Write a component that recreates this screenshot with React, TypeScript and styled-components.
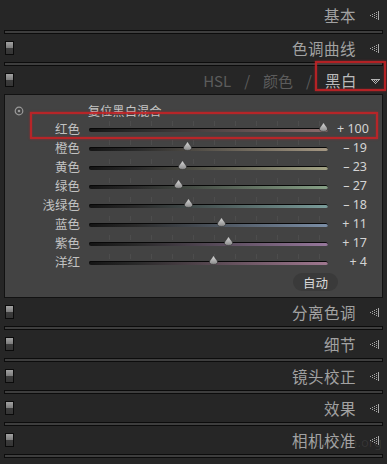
import React from 'react';
import styled, { createGlobalStyle } from 'styled-components';

const GlobalStyle = createGlobalStyle`
  html, body {
    margin: 0;
    padding: 0;
    background: #262626;
  }
  body {
    font-family: "Noto Sans CJK SC", "Noto Sans", sans-serif;
  }
`;

const Page = styled.div`
  position: relative;
  width: 387px;
  height: 464px;
  overflow: hidden;
  box-sizing: border-box;
  padding: 0 4px;
  background: #262626;
`;

const Header = styled.div<{ $first?: boolean }>`
  display: flex;
  align-items: center;
  height: ${p => (p.$first ? 30 : 28)}px;
  padding-left: 1px;
  padding-right: 2px;
`;

const Switch = styled.div`
  width: 7px;
  height: 12px;
  border: 1px solid #0b0b0b;
  background: linear-gradient(to bottom, #a2a2a2 0%, #7c7c7c 48%, #3c3c3c 52%, #343434 100%);
`;

const Titles = styled.div`
  margin-left: auto;
  display: flex;
  align-items: center;
  gap: 13px;
  font-size: 15.5px;
  letter-spacing: 0.5px;
  color: #a2a2a2;
`;

const Tab = styled.span<{ $active?: boolean }>`
  color: ${p => (p.$active ? '#bababa' : '#5c5c5c')};
  font-size: ${p => (p.$active ? '15.5px' : '15px')};
  letter-spacing: ${p => (p.$active ? '0.5px' : '0')};
`;

const Arrow = styled.svg`
  margin-left: 14px;
  margin-right: 1px;
  flex: none;
`;

const Separator = styled.div`
  height: 4px;
  box-sizing: border-box;
  border: 1px solid #0c0c0c;
  background: #3e3e3e;
`;

const Panel = styled.div`
  height: 204px;
  box-sizing: border-box;
  border: 1px solid #121212;
  background: #434343;
  padding-top: 6px;
`;

const ResetRow = styled.div`
  position: relative;
  height: 19px;
  display: flex;
  align-items: center;
  padding-left: 83px;
  font-size: 12px;
  color: #c6c6c6;
  letter-spacing: 0.3px;
`;

const ResetIcon = styled.svg`
  position: absolute;
  left: 9px;
  top: 5px;
`;

const SliderRow = styled.div`
  display: grid;
  grid-template-columns: 75px 239px 30px;
  column-gap: 9px;
  align-items: center;
  height: 19px;
`;

const Label = styled.div`
  text-align: right;
  font-size: 12.5px;
  color: #c2c2c2;
  line-height: 1;
`;

const Track = styled.div<{ $tint: string }>`
  position: relative;
  height: 4px;
  border-radius: 2px;
  background: linear-gradient(to right, #141414 0%, #2a2a2a 20%, ${p => p.$tint} 100%);
  box-shadow: inset 0 1px 0 #080808;

  &::before {
    content: '';
    position: absolute;
    left: 0;
    right: 0;
    top: -7px;
    height: 5px;
    background: repeating-linear-gradient(
      to right,
      transparent 0px,
      transparent 20px,
      rgba(255, 255, 255, 0.05) 20px,
      rgba(255, 255, 255, 0.05) 21px
    );
  }
`;

const Thumb = styled.svg`
  position: absolute;
  top: -6px;
  margin-left: -5px;
`;

const Value = styled.div`
  text-align: right;
  font-size: 12.5px;
  color: #d4d4d4;
  font-family: "Noto Sans", "Liberation Sans", sans-serif;
  white-space: pre;
  line-height: 1;
`;

const AutoRow = styled.div`
  display: flex;
  justify-content: flex-end;
  padding-right: 44px;
  margin-top: 1px;
`;

const AutoButton = styled.div`
  width: 45px;
  height: 18px;
  border-radius: 9px;
  background: #3a3a3a;
  color: #dadada;
  font-size: 12.5px;
  display: flex;
  align-items: center;
  justify-content: center;
`;

const Highlight = styled.div<{ $x: number; $y: number; $w: number; $h: number }>`
  position: absolute;
  left: ${p => p.$x}px;
  top: ${p => p.$y}px;
  width: ${p => p.$w}px;
  height: ${p => p.$h}px;
  box-sizing: border-box;
  border: 2px solid rgba(196, 34, 38, 0.9);
  box-shadow: 0 0 2px rgba(196, 34, 38, 0.7), inset 0 0 2px rgba(196, 34, 38, 0.6);
  pointer-events: none;
`;

const Watermark = styled.div`
  position: absolute;
  right: 5px;
  top: 433px;
  font-family: "Noto Sans", sans-serif;
  font-size: 13px;
  color: rgba(255, 255, 255, 0.08);
  pointer-events: none;
`;

const LeftArrow = () => {
  const dots: React.ReactNode[] = [];
  for (let c = 0; c < 5; c++) {
    const x = c * 2;
    for (let r = -c; r <= c; r += 1) {
      if ((r + c) % 2 === 0 || c === 4) dots.push(<rect key={`${c}-${r}`} x={x} y={4 + r} width={1} height={1} fill="#a8a8a8" />);
    }
  }
  return (
    <Arrow width="10" height="9" viewBox="0 0 10 9">
      {dots}
    </Arrow>
  );
};

const DownArrow = () => {
  const dots: React.ReactNode[] = [];
  for (let r = 0; r < 5; r++) {
    const half = 4 - r;
    for (let c = -half; c <= half; c++) {
      if ((c + half) % 2 === 0 || r === 0) dots.push(<rect key={`${r}-${c}`} x={4 + c} y={r} width={1} height={1} fill="#b4b4b4" />);
    }
  }
  return (
    <Arrow width="9" height="6" viewBox="0 0 9 6" style={{ marginTop: 4 }}>
      {dots}
    </Arrow>
  );
};

const PinThumb = ({ pos }: { pos: number }) => (
  <Thumb width="11" height="10" viewBox="0 0 11 10" style={{ left: pos }}>
    <defs>
      <linearGradient id="pin" x1="0" y1="0" x2="0" y2="1">
        <stop offset="0" stopColor="#dadada" />
        <stop offset="1" stopColor="#8a8a8a" />
      </linearGradient>
    </defs>
    <path d="M5.5 0.5 L9.4 6 Q10.3 9.4 5.5 9.4 Q0.7 9.4 1.6 6 Z" fill="url(#pin)" stroke="#2a2a2a" strokeWidth="0.6" />
  </Thumb>
);

const sliders = [
  { label: '红色', value: 100, tint: '#8a6d6d' },
  { label: '橙色', value: -19, tint: '#a59883' },
  { label: '黄色', value: -23, tint: '#a3a384' },
  { label: '绿色', value: -27, tint: '#86a086' },
  { label: '浅绿色', value: -18, tint: '#7a9c9a' },
  { label: '蓝色', value: 11, tint: '#7b8ea6' },
  { label: '紫色', value: 17, tint: '#97789c' },
  { label: '洋红', value: 4, tint: '#a07890' },
];

const fmt = (v: number) => (v >= 0 ? `+ ${v}` : `\u2013 ${Math.abs(v)}`);

const collapsed = ['分离色调', '细节', '镜头校正', '效果', '相机校准'];

export default function App() {
  return (
    <Page>
      <GlobalStyle />
      <Header $first>
        <Titles>基本</Titles>
        <LeftArrow />
      </Header>
      <Separator />
      <Header>
        <Switch />
        <Titles>色调曲线</Titles>
        <LeftArrow />
      </Header>
      <Separator />
      <Header>
        <Switch />
        <Titles>
          <Tab>HSL</Tab>
          <Tab>/</Tab>
          <Tab>颜色</Tab>
          <Tab>/</Tab>
          <Tab $active>黑白</Tab>
        </Titles>
        <DownArrow />
      </Header>
      <Panel>
        <ResetRow>
          <ResetIcon width="10" height="10" viewBox="0 0 10 10">
            <circle cx="5" cy="5" r="3.8" fill="none" stroke="#9a9a9a" strokeWidth="1.2" />
            <circle cx="5" cy="5" r="1.3" fill="#9a9a9a" />
          </ResetIcon>
          复位黑白混合
        </ResetRow>
        {sliders.map(s => (
          <SliderRow key={s.label}>
            <Label>{s.label}</Label>
            <Track $tint={s.tint}>
              <PinThumb pos={5 + ((s.value + 100) / 200) * 229} />
            </Track>
            <Value>{fmt(s.value)}</Value>
          </SliderRow>
        ))}
        <AutoRow>
          <AutoButton>自动</AutoButton>
        </AutoRow>
      </Panel>
      {collapsed.map(t => (
        <React.Fragment key={t}>
          <Header>
            <Switch />
            <Titles>{t}</Titles>
            <LeftArrow />
          </Header>
          <Separator />
        </React.Fragment>
      ))}
      <Highlight $x={315} $y={61} $w={71} $h={30} />
      <Highlight $x={30} $y={112} $w={348} $h={27} />
      <Watermark>fotofilm.org</Watermark>
    </Page>
  );
}
